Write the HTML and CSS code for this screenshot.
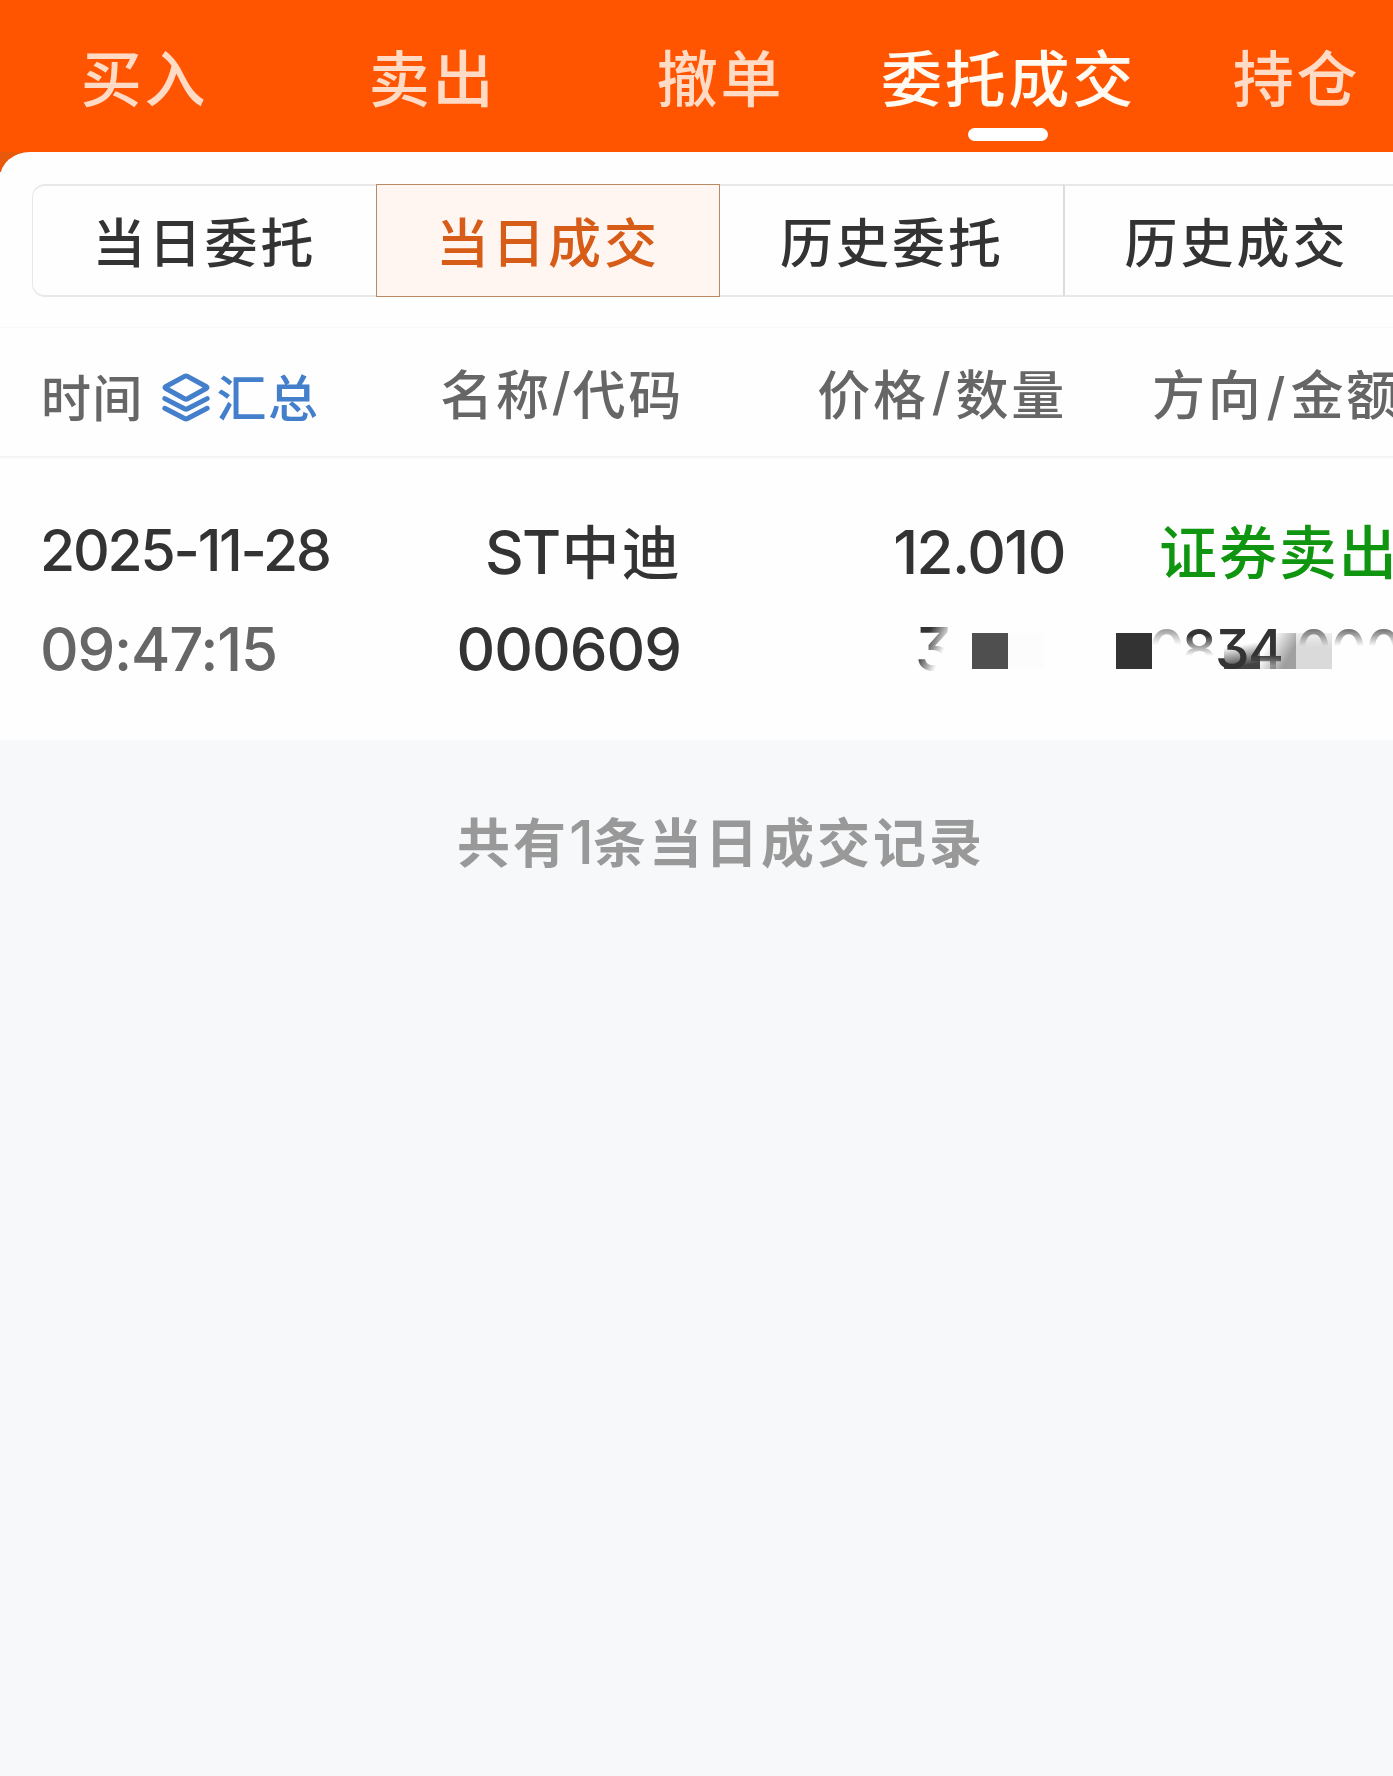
FILE: index.html
```html
<!DOCTYPE html>
<html lang="zh-CN">
<head>
<meta charset="utf-8">
<title>委托成交</title>
<link rel="stylesheet" href="styles.css">
</head>
<body>
<nav class="tabs">
  <a class="tab">买入</a>
  <a class="tab">卖出</a>
  <a class="tab">撤单</a>
  <a class="tab tab-active">委托成交</a>
  <a class="tab">持仓</a>
</nav>
<div class="sheet-wrap">
<main class="sheet">
  <div class="segments">
    <span class="segment">当日委托</span>
    <span class="segment segment-active">当日成交</span>
    <span class="segment">历史委托</span>
    <span class="segment">历史成交</span>
  </div>
  <div class="columns head">
    <div class="head-time">
      <span>时间</span>
      <svg class="layers" viewBox="0 0 48 49" fill="none" stroke="currentColor" stroke-width="5" stroke-linecap="round" stroke-linejoin="round">
        <path d="M22.5 3.4Q24 2.6 25.5 3.4L44.5 13.8Q45.6 14.5 44.5 15.2L25.5 25.8Q24 26.6 22.5 25.8L3.5 15.2Q2.4 14.5 3.5 13.8Z"/>
        <path d="M2.8 25.6 22.5 35.8Q24 36.6 25.5 35.8L45.2 25.6"/>
        <path d="M2.8 35.3 22.5 45.5Q24 46.3 25.5 45.5L45.2 35.3"/>
      </svg>
      <span class="summary">汇总</span>
    </div>
    <div class="right">名称<span class="slash">/</span>代码</div>
    <div class="right">价格<span class="slash">/</span>数量</div>
    <div class="last">方向<span class="slash">/</span>金额</div>
  </div>
  <div class="columns record">
    <div class="date">2025-11-28</div>
    <div class="right stock"><span class="latin">ST</span>中迪</div>
    <div class="right num price">12.010</div>
    <div class="last side">证券卖出</div>
    <div class="num time">09:47:15</div>
    <div class="right num code">000609</div>
    <div class="quantity"><span class="digit fade-side">3</span><i class="block block-gray"></i></div>
    <div class="amount"><i class="block block-dark"></i><i class="block block-low"></i><i class="block block-mid"></i><i class="block block-light"></i><span class="digit fade-faint">0</span><span class="digit fade-half">8</span><span class="digit">3</span><span class="digit fade-end">4</span><span class="digit decimals fade-top">0</span><span class="digit fade-top">0</span><span class="digit fade-top">0</span></div>
  </div>
</main>
</div>
<p class="total">共有<span class="count">1</span>条当日成交记录</p>
</body>
</html>
```
FILE: styles.css
```css
* { box-sizing: border-box; }
html { overflow: hidden; }
body {
  margin: 0;
  width: 1393px;
  height: 1776px;
  overflow: hidden;
  background: #f6f8fa;
  color: #333;
  font-family: "Noto Sans CJK SC", sans-serif;
  font-weight: 500;
  white-space: nowrap;
}
.tabs {
  display: grid;
  grid-template-columns: repeat(5, 288px);
  height: 152px;
  background: #ff5500;
}
.tab {
  position: relative;
  text-align: center;
  font-size: 61px;
  line-height: 152px;
  letter-spacing: 2.7px;
  padding-left: 1px;
  color: #ffdac5;
}
.tab-active { color: #fffaf2; }
.tab-active::after {
  content: "";
  position: absolute;
  left: 104px;
  top: 128px;
  width: 80px;
  height: 13px;
  border-radius: 7px;
  background: #fff;
}
.sheet-wrap { background: linear-gradient(#e8590c 20px, #fefefe 20px); }
.sheet {
  height: 588px;
  padding-top: 32px;
  background: #fefefe;
  border-top-left-radius: 30px 26px;
}
.segments {
  display: grid;
  grid-template: 113px / repeat(4, 344px);
  width: 1376px;
  margin-left: 32px;
}
.segment {
  border: solid #e8e8e8;
  border-width: 2px 0;
  text-align: center;
  font-size: 53px;
  line-height: 109px;
  letter-spacing: 3px;
}
.segment:first-child { border-left-width: 1px; border-radius: 13px 0 0 13px; }
.segment:last-child { border-left: 2px solid #dcdcdc; margin-left: -1px; }
.segment-active {
  border: 1px solid #b98a64;
  background: #fff6f2;
  color: #d65c18;
  line-height: 111px;
}
.columns {
  display: grid;
  grid-template-columns: 402px 240px 383px 328px;
  padding-left: 40px;
}
.right { display: flex; justify-content: flex-end; }
.head {
  height: 131px;
  margin-top: 30px;
  border-top: 1px solid #f8f8f8;
  border-bottom: 2px solid #f5f5f5;
  color: #666;
  font-size: 53px;
  line-height: 128px;
  letter-spacing: 2.7px;
}
.head .right { margin-right: -2px; }
.head-time {
  display: flex;
  align-items: center;
  padding-left: 1px;
  line-height: 124px;
  font-size: 50px;
  letter-spacing: 1.3px;
}
.layers { width: 48px; height: 49px; margin: 5px 7px 0 18px; color: #437fcb; }
.summary { color: #437fcb; }
.slash {
  display: inline-block;
  width: 27px;
  padding-right: 2px;
  text-align: center;
  font-family: Inter, sans-serif;
  font-size: 51px;
  letter-spacing: 0;
}
.last { padding-left: 87px; }
.record {
  grid-template-rows: 98px 98px;
  padding-top: 45px;
  font-size: 58px;
  line-height: 94px;
}
.latin, .num, .date, .digit, .count { font-family: Inter, sans-serif; font-feature-settings: "cv09"; }
.date { font-size: 57px; letter-spacing: -2.2px; line-height: 95px; }
.date, .num, .digit, .latin { font-weight: 450; }
.stock { letter-spacing: 2.3px; line-height: 92px; }
.latin { font-size: 60px; letter-spacing: -1.8px; margin-right: 2px; line-height: 99px; }
.num { font-size: 60px; letter-spacing: -1px; line-height: 97px; }
.code { margin-right: 1px; }
.price { letter-spacing: -1.5px; line-height: 99px; }
.side { padding-left: 94px; letter-spacing: 1.9px; line-height: 92px; color: #0f950f; }
.time { color: #666; letter-spacing: -1.2px; }
.quantity, .amount { display: flex; position: relative; line-height: 97px; }
.quantity { padding-left: 233px; }
.amount { padding-left: 84px; }
.digit { position: relative; width: 33px; height: 98px; text-align: center; font-size: 55px; }
.quantity .digit { font-size: 60px; }
.decimals, .decimals ~ .digit { width: 35px; }
.decimals { margin-left: 15px; }
.block { position: absolute; top: 32px; width: 36px; height: 36px; }
.block-gray { left: 290px; background: #4f4f4f; box-shadow: 36px 0 #fcfcfc; }
.block-dark { left: 51px; background: #333; }
.block-low { left: 159px; background: linear-gradient(170deg, transparent 35%, #444 85%); }
.block-mid { left: 195px; background: linear-gradient(120deg, transparent 25%, #a0a0a0 75%); }
.block-light { left: 231px; background: linear-gradient(#eee, #dadada 40%); }
.fade-side { mask-image: linear-gradient(115deg, #000 36%, transparent 66%); }
.fade-faint { mask-image: linear-gradient(rgba(0,0,0,.45) 30%, transparent 45%); }
.fade-half { mask-image: linear-gradient(#000 35%, transparent 56%); }
.fade-end { mask-image: linear-gradient(#000 55%, rgba(0,0,0,.35) 66%); }
.fade-top { mask-image: linear-gradient(rgba(0,0,0,.65) 30%, transparent 46%); }
.total {
  display: flex;
  justify-content: center;
  margin: 47px 0 0;
  padding-left: 49px;
  color: #999;
  font-size: 53px;
  font-weight: 700;
  line-height: 106px;
  letter-spacing: 3px;
}
.count { width: 24px; padding-top: 2px; letter-spacing: 0; text-align: center; font-size: 60px; font-weight: 500; }
```
